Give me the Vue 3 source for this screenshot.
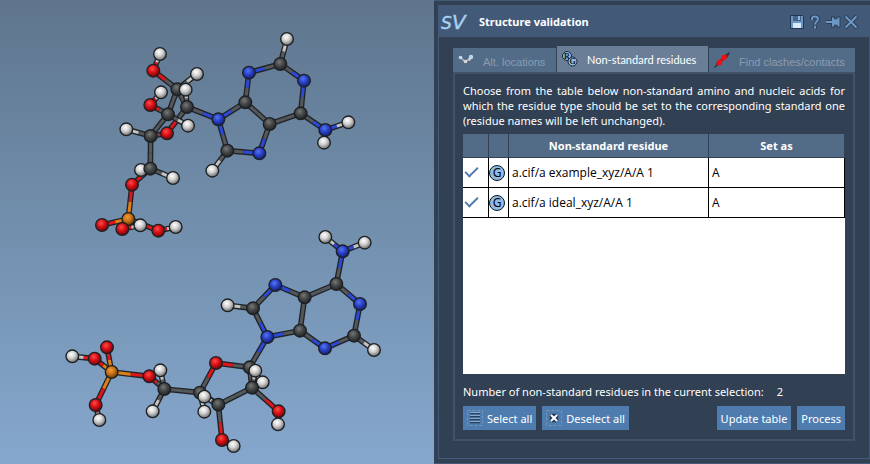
<template>
  <div class="app">
    <!-- 3D view -->
    <main class="viewer">
      <svg class="scene" viewBox="0 0 1302 1392" role="img" aria-label="Molecules">
        <defs>
          <radialGradient
            v-for="(c, name) in elements"
            :id="`atom-${name}`"
            :key="name"
            cx="0.42"
            cy="0.35"
            r="0.62"
          >
            <stop offset="0" :stop-color="c.light" />
            <stop offset="0.5" :stop-color="c.base" />
            <stop offset="1" :stop-color="c.dark" />
          </radialGradient>
        </defs>
        <g
          v-for="(mol, m) in molecules"
          :key="m"
          :transform="`translate(${mol.x} ${mol.y})`"
        >
          <g v-for="(b, i) in bondsOf(mol)" :key="`b${i}`">
            <path :d="b.full" class="bond-outline" />
            <path :d="b.first" class="bond" :stroke="b.colorA" />
            <path :d="b.second" class="bond" :stroke="b.colorB" />
          </g>
          <circle
            v-for="(atom, name) in mol.atoms"
            :key="name"
            class="atom"
            :cx="atom[0]"
            :cy="atom[1]"
            :r="elements[name[0]].r"
            :fill="`url(#atom-${name[0]})`"
          />
        </g>
      </svg>
    </main>

    <!-- Side panel -->
    <aside class="side">
      <section class="panel">
        <header class="titlebar">
          <svg class="logo" width="30" height="24" viewBox="0 0 30 24">
            <text x="1" y="19" class="logo__s">S</text>
            <text x="12" y="19" class="logo__v">V</text>
          </svg>
          <h1>Structure validation</h1>
          <div class="titlebar__tools">
            <button type="button" class="tool" aria-label="Save">
              <svg width="16" height="16" viewBox="0 0 16 16">
                <path d="M1.500 1.500h12l1 1v12h-13z" fill="#6a99c9" stroke="#22364d" />
                <path d="M4 2h8v5H4z" fill="#466384" />
                <path d="M9 2h2v4H9z" fill="#8db8e4" />
                <path d="M4 9h8v5H4z" fill="#d9ebfb" />
              </svg>
            </button>
            <button type="button" class="tool" aria-label="Help">
              <svg width="16" height="16" viewBox="0 0 16 16">
                <g fill="none" stroke-linejoin="round">
                  <path d="M5 6V4Q5.500 2.500 8 2.500t3 2.500Q11 6.500 9.500 7.700T8 10.500M8 12v2.500" stroke="#2a4059" stroke-width="4" />
                  <path d="M5 6V4Q5.500 2.500 8 2.500t3 2.500Q11 6.500 9.500 7.700T8 10.500M8 12v2.500" stroke="#6d97c4" stroke-width="2" />
                </g>
              </svg>
            </button>
            <button type="button" class="tool" aria-label="Pin">
              <svg width="16" height="16" viewBox="0 0 16 16">
                <path d="M1 8h7M8 2.500v11M13.500 2.500v11" stroke="#2a4059" stroke-width="4" />
                <path d="M8 5h5v6H8z" fill="#6d97c4" stroke="#2a4059" />
                <path d="M1 8h7M8 3.500v9M13.500 3.500v9" stroke="#6d97c4" stroke-width="2" />
                <path d="M8 5.500h5v5H8z" fill="#6d97c4" />
              </svg>
            </button>
            <button type="button" class="tool" aria-label="Close">
              <svg width="16" height="16" viewBox="0 0 16 16">
                <path d="M2 2l12 12M14 2L2 14" stroke="#2a4059" stroke-width="4" />
                <path d="M2.500 2.500l11 11M13.500 2.500l-11 11" stroke="#6d97c4" stroke-width="2" />
              </svg>
            </button>
          </div>
        </header>

        <div class="panel__body">
          <nav class="tabs" role="tablist">
            <button
              v-for="tab in tabs"
              :key="tab.id"
              type="button"
              role="tab"
              class="tab"
              :class="{ 'tab--active': tab.id === activeTab }"
              :aria-selected="tab.id === activeTab"
              @click="activeTab = tab.id"
            >
              <svg v-if="tab.id === 'alt'" width="16" height="16" viewBox="0 0 16 16">
                <path d="M2.500 5.500L7.500 10l5-4.500" fill="none" stroke="#c4b5b4" stroke-width="1.500" />
                <circle cx="2.500" cy="5.500" r="1.800" fill="#c3dcf0" />
                <circle cx="13" cy="5" r="2.200" fill="#b9d9f3" />
                <circle cx="7.500" cy="9.500" r="1.800" fill="#d8d9de" />
                <circle cx="11.500" cy="7.500" r="1.200" fill="#e2d4d0" />
              </svg>
              <svg v-else-if="tab.id === 'residues'" width="16" height="16" viewBox="0 0 16 16">
                <circle cx="5" cy="5" r="4.500" class="badge" />
                <circle cx="10.500" cy="10.500" r="4.500" class="badge" />
                <text x="5" y="8" class="badge__text">R</text>
                <text x="10.500" y="13" class="badge__text">G</text>
              </svg>
              <svg v-else width="16" height="16" viewBox="0 0 16 16">
                <path d="M0.500 15.500l4-5 1 1zM15.500 0.500l-5 3.500 2 2z" fill="#26313f" stroke="#26313f" />
                <path d="M2.500 13L13 3" stroke="#a01a20" stroke-width="3" />
                <circle cx="5.500" cy="10.500" r="2.700" fill="#f80c10" />
                <circle cx="10" cy="5.500" r="2.700" fill="#f80c10" />
              </svg>
              <span>{{ tab.label }}</span>
            </button>
          </nav>

          <div class="pane">
            <p class="intro">
              Choose from the table below non-standard amino and nucleic acids for
              which the residue type should be set to the corresponding standard one
              (residue names will be left unchanged).
            </p>

            <div class="grid">
              <table>
                <colgroup>
                  <col class="col-check" />
                  <col class="col-type" />
                  <col class="col-name" />
                  <col />
                </colgroup>
                <thead>
                  <tr>
                    <th></th>
                    <th></th>
                    <th>Non-standard residue</th>
                    <th>Set as</th>
                  </tr>
                </thead>
                <tbody>
                  <tr v-for="row in rows" :key="row.name">
                    <td class="cell-icon">
                      <input v-model="row.checked" type="checkbox" :aria-label="row.name" />
                    </td>
                    <td class="cell-icon">
                      <svg width="16" height="16" viewBox="0 0 16 16">
                        <circle cx="8" cy="8" r="7.500" class="residue" />
                        <text x="8" y="12" class="residue__text">G</text>
                      </svg>
                    </td>
                    <td>{{ row.name }}</td>
                    <td>{{ row.setAs }}</td>
                  </tr>
                </tbody>
              </table>
            </div>

            <p class="count">
              <span>Number of non-standard residues in the current selection:</span>
              <span>{{ selectedCount }}</span>
            </p>

            <div class="actions">
              <button type="button" class="btn" @click="setAll(true)">
                <svg width="16" height="16" viewBox="0 0 16 16">
                  <rect x="0.500" y="0.500" width="15" height="15" class="marquee" />
                  <path d="M3 3.500h10M3 6.500h10M3 9.500h10M3 12.500h10" stroke="#29425f" stroke-width="1.500" />
                  <path d="M3 2.500h10M3 5.500h10M3 8.500h10M3 11.500h10" stroke="#86a9cc" />
                </svg>
                Select all
              </button>
              <button type="button" class="btn" @click="setAll(false)">
                <svg width="16" height="16" viewBox="0 0 16 16">
                  <rect x="0.500" y="0.500" width="15" height="15" class="marquee" />
                  <path d="M5 5l6 6M11 5l-6 6" stroke="#20354d" stroke-width="5" />
                  <path d="M5 5l6 6M11 5l-6 6" stroke="#fff" stroke-width="2" />
                </svg>
                Deselect all
              </button>
              <span class="spacer"></span>
              <button type="button" class="btn">Update table</button>
              <button type="button" class="btn">Process</button>
            </div>
          </div>
        </div>
      </section>
    </aside>
  </div>
</template>

<script setup>
import { computed, reactive, ref } from "vue";

const tabs = [
  { id: "alt", label: "Alt. locations" },
  { id: "residues", label: "Non-standard residues" },
  { id: "clashes", label: "Find clashes/contacts" },
];
const activeTab = ref("residues");

const rows = reactive([
  { name: "a.cif/a example_xyz/A/A 1", setAs: "A", checked: true },
  { name: "a.cif/a ideal_xyz/A/A 1", setAs: "A", checked: true },
]);

const selectedCount = computed(() => rows.filter((r) => r.checked).length);

function setAll(value) {
  rows.forEach((r) => {
    r.checked = value;
  });
}

const elements = {
  C: { light: "#777777", base: "#454748", dark: "#242526", bond: "#55585a", r: 19 },
  H: { light: "#ffffff", base: "#cfcfcf", dark: "#747474", bond: "#c4c4c4", r: 19 },
  N: { light: "#5674ee", base: "#2942c8", dark: "#142174", bond: "#2c48d8", r: 19 },
  O: { light: "#ff4a4a", base: "#d81015", dark: "#74070a", bond: "#e0151a", r: 19 },
  P: { light: "#f09a3c", base: "#cc7414", dark: "#693a08", bond: "#df8017", r: 19 },
};

// The first letter of an atom name is its element; later atoms lie in front
const molecules = [
  {
    x: 241,
    y: 61,
    atoms: {
      H1: [239, 101], O1: [219, 151], C1: [291, 207], H2: [350, 161],
      C2: [320, 260], H3: [316, 208], H4: [242, 216], O2: [210, 254],
      C3: [263, 282], H5: [323, 316], H6: [138, 327], C4: [211, 347],
      O3: [260, 339], N1: [414, 297], C5: [495, 246], N2: [506, 157],
      C6: [600, 131], H7: [620, 56], N3: [671, 181], C7: [661, 279],
      C8: [568, 311], N4: [537, 399], C9: [441, 391], H8: [396, 451],
      H10: [731, 367], N5: [735, 329], H9: [804, 306], H11: [182, 449],
      C10: [210, 445], H12: [278, 473], O4: [155, 493], P1: [144, 596],
      O5: [65, 614], O6: [126, 626], H13: [180, 615], O7: [234, 631],
      H14: [286, 620],
    },
    bonds:
      "H1-O1 O1-C1 C1-H2 C1-C2 C1-C3 C2-H3 C2-N1 C2-O3 O2-H4 O2-C3 C3-H5 C3-C4 " +
      "C4-H6 C4-O3 C4-C10 N1-C5 N1-C9 C5-N2 N2-C6 C6-H7 C6-N3 N3-C7 C7-C8 C8-C5 " +
      "C8-N4 N4-C9 C9-H8 C7-N5 N5-H9 N5-H10 C10-H11 C10-H12 C10-O4 O4-P1 P1-O5 " +
      "P1-O7 P1-O6 O6-H13 O7-H14",
  },
  {
    x: 151,
    y: 661,
    atoms: {
      H1: [825, 50], H2: [943, 67], N1: [877, 93], C1: [858, 191],
      N2: [675, 194], C2: [763, 231], N3: [929, 251], C3: [608, 264],
      H3: [532, 255], C4: [749, 331], N4: [651, 350], C5: [911, 346],
      N5: [824, 384], H4: [971, 389], H5: [637, 486], C6: [598, 441],
      O1: [497, 428], C7: [605, 502], H6: [615, 451], C8: [449, 517],
      H7: [462, 574], C9: [504, 553], H8: [462, 529], O2: [685, 573],
      H9: [683, 612], O3: [515, 659], H10: [550, 677], O4: [297, 468],
      C10: [342, 506], H11: [330, 450], H12: [307, 573], O5: [133, 415],
      H13: [66, 408], O6: [170, 381], P1: [184, 455], H14: [147, 599],
      O7: [136, 554],
    },
    bonds:
      "N1-H1 N1-H2 N1-C1 C1-C2 C1-N3 C2-N2 N2-C3 C3-H3 C3-N4 N4-C4 C4-C2 C4-N5 " +
      "N5-C5 C5-N3 C5-H4 N4-C6 C6-H5 C6-O1 C6-C7 C7-H6 O1-C8 C8-H7 C8-C9 C9-C7 " +
      "C9-H8 C7-O2 O2-H9 C9-O3 O3-H10 C8-C10 C10-O4 C10-H11 C10-H12 O4-P1 P1-O5 " +
      "O5-H13 P1-O6 P1-O7 O7-H14",
  },
];

// Each bond is split in the middle, every half takes the colour of its atom
function bondsOf(mol) {
  return mol.bonds.split(" ").map((pair) => {
    const [a, b] = pair.split("-");
    const [x1, y1] = mol.atoms[a];
    const [x2, y2] = mol.atoms[b];
    const mx = (x1 + x2) / 2;
    const my = (y1 + y2) / 2;
    return {
      full: `M${x1} ${y1}L${x2} ${y2}`,
      first: `M${x1} ${y1}L${mx} ${my}`,
      second: `M${mx} ${my}L${x2} ${y2}`,
      colorA: elements[a[0]].bond,
      colorB: elements[b[0]].bond,
    };
  });
}
</script>

<style>
body {
  margin: 0;
  background: #314053;
}
</style>

<style scoped>
.app {
  display: grid;
  grid-template-columns: 434fr 436fr;
  min-height: 100vh;
  font-family: "Noto Sans", "Open Sans", sans-serif;
  font-size: 11px;
  line-height: 15px;
  color: #fff;
}

.viewer {
  min-width: 0;
  background: linear-gradient(#5f758d, #7290ae 50%, #86a7cd);
}

.scene {
  display: block;
  width: 100%;
}

.bond-outline {
  stroke: #202327;
  stroke-width: 17;
}

.bond {
  stroke-width: 9;
}

.atom {
  stroke: #1d2023;
  stroke-width: 4;
}

.side {
  min-width: 0;
  display: flex;
  flex-direction: column;
  box-sizing: border-box;
  padding: 4px 0 4px 4px;
  background: #314053;
  border-top: 1px solid #425a78;
  border-bottom: 1px solid #425a78;
}

.panel {
  flex: 1;
  display: flex;
  flex-direction: column;
  border: 1px solid #425a78;
}

.titlebar {
  display: flex;
  align-items: center;
  height: 31px;
  padding: 0 10px 0 1px;
  background: #425a78;
}

.titlebar h1 {
  flex: 1;
  margin: 0 0 0 9px;
  font-size: 11px;
  font-weight: 700;
}

.logo {
  font-family: "DejaVu Sans", sans-serif;
  font-style: oblique;
  fill: #a9d1f5;
  stroke: #a9d1f5;
  stroke-width: 0.4px;
}

.logo__s {
  font-size: 17px;
}

.logo__v {
  font-size: 20px;
}

.titlebar__tools {
  display: flex;
  gap: 2px;
}

.tool {
  display: flex;
  padding: 0;
  border: none;
  background: none;
  cursor: pointer;
}

.panel__body {
  flex: 1;
  display: flex;
  flex-direction: column;
  padding: 9px 14px 17px 14px;
}

.tabs {
  display: grid;
  grid-template-columns: 103fr 151fr 146fr;
  align-items: end;
  gap: 1px;
}

.tab {
  display: flex;
  align-items: center;
  gap: 9px;
  height: 24px;
  padding: 0 0 0 5px;
  border: none;
  background: #526c87;
  color: #8b9bb0;
  font-family: "Liberation Sans", Arial, sans-serif;
  font-size: 11px;
  white-space: nowrap;
  cursor: pointer;
}

.tab span {
  padding-top: 3px;
}

.tab--active {
  height: 26px;
  background: #6a7f97;
  color: #fff;
  font-family: Lato, "Noto Sans", sans-serif;
}

.tab--active span {
  padding-top: 1px;
}

.badge {
  fill: #8fbbe5;
  stroke: #182431;
}

.badge__text {
  font: bold 8px "Liberation Serif", serif;
  text-anchor: middle;
  fill: #0a1420;
}

.pane {
  flex: 1;
  display: flex;
  flex-direction: column;
  padding: 9px 8px;
  border: 2px solid #425167;
}

.intro {
  margin: 0 0 6px;
  text-align: justify;
}

.grid {
  flex: 1;
  background: #fff;
}

table {
  width: 100%;
  table-layout: fixed;
  border-collapse: separate;
  border-spacing: 0;
  color: #000;
}

.col-check {
  width: 26px;
}

.col-type {
  width: 20px;
}

.col-name {
  width: 200px;
}

th {
  box-sizing: border-box;
  height: 24px;
  padding: 0;
  background: #526c87;
  color: #fff;
  font-weight: 700;
  border-right: 1px solid #314053;
  border-bottom: 1px solid #314053;
}

td {
  box-sizing: border-box;
  height: 30px;
  padding: 0 3px;
  border-right: 1px solid #000;
  border-bottom: 1px solid #000;
  font-family: "Open Sans", "Noto Sans", sans-serif;
  font-size: 12px;
}

.cell-icon {
  padding: 0;
}

.cell-icon svg {
  display: block;
}

.cell-icon input {
  appearance: none;
  display: flex;
  width: 16px;
  height: 16px;
  margin: 0 1px;
}

.cell-icon input:checked::before {
  content: "";
  width: 13px;
  height: 7px;
  margin: 2px 0 0 1px;
  border-left: 2px solid #4f7caf;
  border-bottom: 2px solid #4f7caf;
  transform: rotate(-45deg);
  box-sizing: border-box;
}

.residue {
  fill: #8fbbe5;
  stroke: #0c141c;
}

.residue__text {
  font: 12px "Noto Sans", sans-serif;
  text-anchor: middle;
  fill: #000;
}

.count {
  display: flex;
  gap: 13px;
  margin: 10px 0 7px;
}

.actions {
  display: flex;
  gap: 6px;
}

.spacer {
  flex: 1;
}

.btn {
  display: flex;
  align-items: center;
  gap: 4px;
  height: 24px;
  padding: 0 4px;
  border: none;
  background: #4f7caf;
  color: #fff;
  font: inherit;
  white-space: nowrap;
  cursor: pointer;
}

.btn:hover {
  filter: brightness(1.08);
}

.marquee {
  fill: none;
  stroke: #7596b8;
  stroke-dasharray: 3 2;
}
</style>
